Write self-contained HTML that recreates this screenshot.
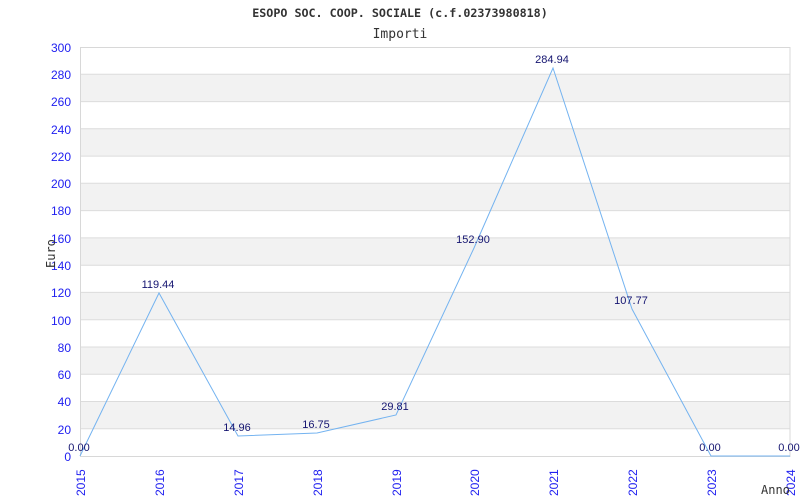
<!DOCTYPE html><html><head><style>body{margin:0;background:#fff}svg{display:block}</style></head><body>
<svg width="800" height="500" xmlns="http://www.w3.org/2000/svg" font-family="Liberation Sans, sans-serif">
<rect width="800" height="500" fill="#fff"/>
<g fill="#f2f2f2">
<rect x="80" y="401.5" width="710" height="27.3"/>
<rect x="80" y="347" width="710" height="27.3"/>
<rect x="80" y="292.4" width="710" height="27.3"/>
<rect x="80" y="237.9" width="710" height="27.3"/>
<rect x="80" y="183.3" width="710" height="27.3"/>
<rect x="80" y="128.8" width="710" height="27.3"/>
<rect x="80" y="74.3" width="710" height="27.3"/>
</g>
<g stroke="#dcdcdc" stroke-width="1">
<line x1="80" y1="428.7" x2="790" y2="428.7"/><line x1="80" y1="401.5" x2="790" y2="401.5"/>
<line x1="80" y1="374.2" x2="790" y2="374.2"/><line x1="80" y1="347" x2="790" y2="347"/>
<line x1="80" y1="319.7" x2="790" y2="319.7"/><line x1="80" y1="292.4" x2="790" y2="292.4"/>
<line x1="80" y1="265.2" x2="790" y2="265.2"/><line x1="80" y1="237.9" x2="790" y2="237.9"/>
<line x1="80" y1="210.6" x2="790" y2="210.6"/><line x1="80" y1="183.3" x2="790" y2="183.3"/>
<line x1="80" y1="156.1" x2="790" y2="156.1"/><line x1="80" y1="128.8" x2="790" y2="128.8"/>
<line x1="80" y1="101.6" x2="790" y2="101.6"/><line x1="80" y1="74.3" x2="790" y2="74.3"/>
</g>
<rect x="80.5" y="47.5" width="709.5" height="409" fill="none" stroke="#d8d8d8"/>
<polyline fill="none" stroke="#74b3f0" stroke-width="1" points="80,456 159,293 238,436 317,433 396,415 474,248 553,68 632,309 711,456 790,456"/>
<g fill="#2020f0" font-size="12" text-anchor="end">
<text x="71" y="52">300</text><text x="71" y="79">280</text><text x="71" y="106">260</text>
<text x="71" y="134">240</text><text x="71" y="161">220</text><text x="71" y="188">200</text>
<text x="71" y="215">180</text><text x="71" y="243">160</text><text x="71" y="270">140</text>
<text x="71" y="297">120</text><text x="71" y="325">100</text><text x="71" y="352">80</text>
<text x="71" y="379">60</text><text x="71" y="406">40</text><text x="71" y="434">20</text>
<text x="71" y="461">0</text>
</g>
<g fill="#2020f0" font-size="12">
<text transform="translate(85,496) rotate(-90)">2015</text>
<text transform="translate(164,496) rotate(-90)">2016</text>
<text transform="translate(243,496) rotate(-90)">2017</text>
<text transform="translate(322,496) rotate(-90)">2018</text>
<text transform="translate(401,496) rotate(-90)">2019</text>
<text transform="translate(479,496) rotate(-90)">2020</text>
<text transform="translate(558,496) rotate(-90)">2021</text>
<text transform="translate(637,496) rotate(-90)">2022</text>
<text transform="translate(716,496) rotate(-90)">2023</text>
<text transform="translate(795,496) rotate(-90)">2024</text>
</g>
<g fill="#141470" font-size="11" text-anchor="middle">
<text x="79" y="451">0.00</text><text x="158" y="288">119.44</text><text x="237" y="431">14.96</text>
<text x="316" y="428">16.75</text><text x="395" y="410">29.81</text><text x="473" y="243">152.90</text>
<text x="552" y="63">284.94</text><text x="631" y="304">107.77</text><text x="710" y="451">0.00</text>
<text x="789" y="451">0.00</text>
</g>
<g font-family="DejaVu Sans Mono, Liberation Mono, monospace" fill="#333">
<text x="400" y="17" font-size="11.7" font-weight="bold" text-anchor="middle">ESOPO SOC. COOP. SOCIALE (c.f.02373980818)</text>
<text x="400" y="38" font-size="13" text-anchor="middle">Importi</text>
<text x="761" y="494" font-size="12">Anno</text>
<text transform="translate(55,268) rotate(-90)" font-size="12">Euro</text>
</g>
</svg>
</body></html>
